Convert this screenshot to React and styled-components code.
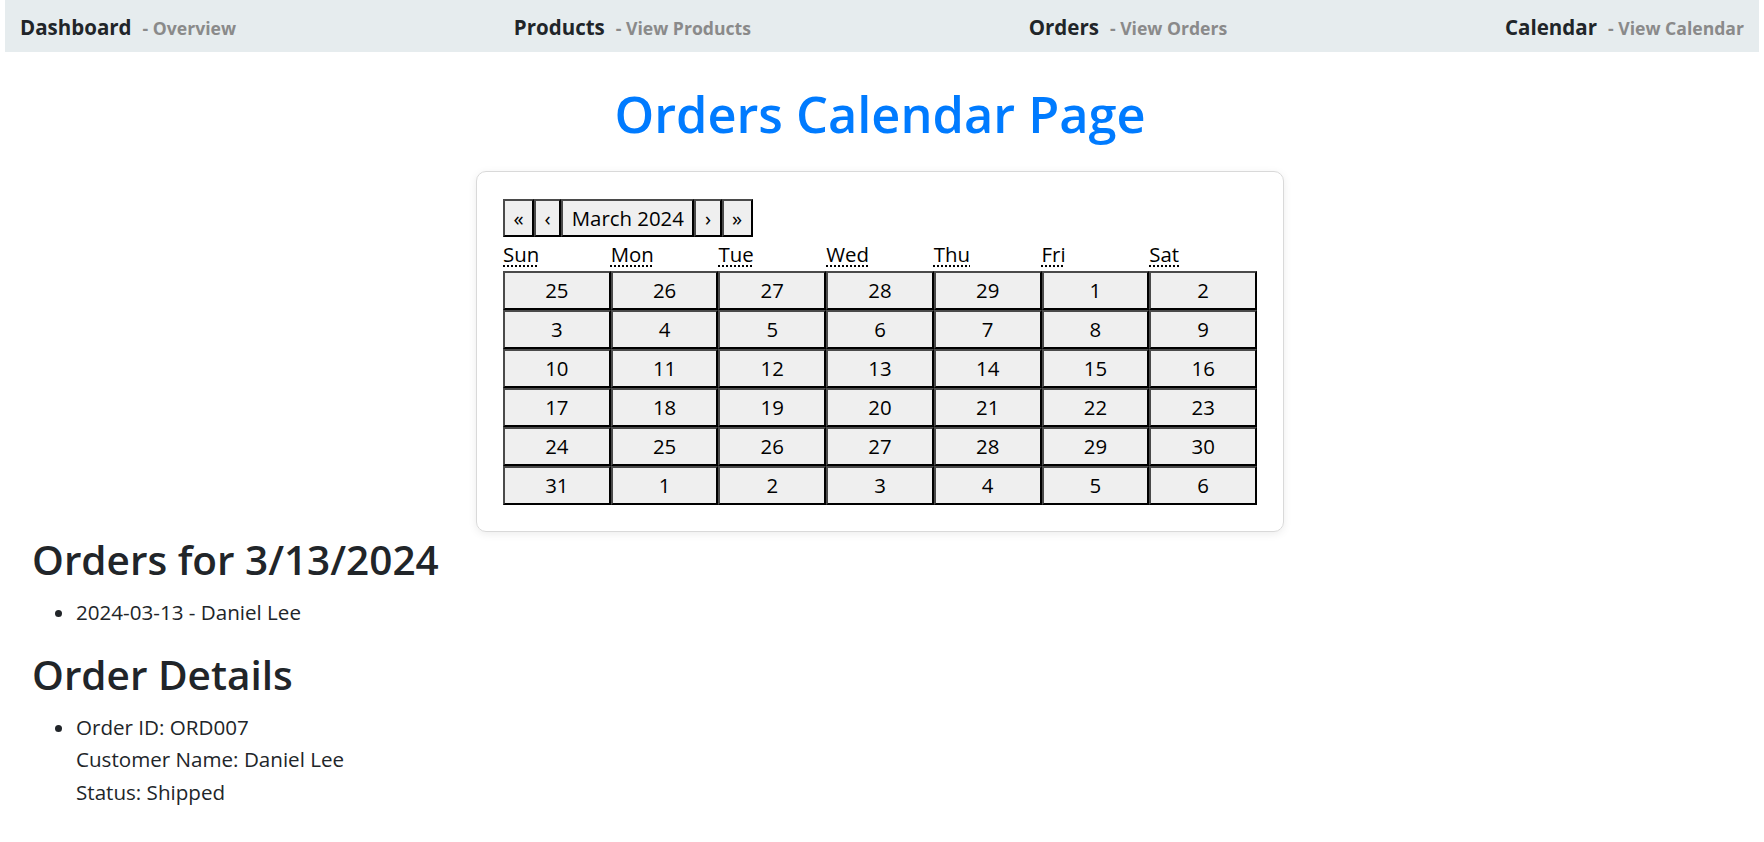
import React from "react";
import styled, { createGlobalStyle } from "styled-components";

const GlobalStyle = createGlobalStyle`
	body {
		margin: 0;
		font-family: "Open Sans", "Noto Sans", sans-serif;
		font-size: 21.6px;
		line-height: 32.4px;
		color: #212529;
		background: #fff;
	}
`;

const Page = styled.div`
	padding: 0 5px;
`;

const NavBar = styled.nav`
	display: flex;
	justify-content: space-between;
	align-items: center;
	height: 52px;
	padding: 4px 15px 0;
	box-sizing: border-box;
	background-color: #e6ecee;
`;

const NavItem = styled.div`
	font-size: 20.5px;
	font-weight: 700;
	color: #212529;
	white-space: nowrap;
`;

const NavSub = styled.span`
	font-size: 17.6px;
	color: #8a8a8a;
	margin-left: 11px;
`;

const Main = styled.main`
	padding: 29px 31px 0 27px;
`;

const Title = styled.h1`
	margin: 0 0 25px;
	text-align: center;
	font-size: 50.5px;
	line-height: 65px;
	font-weight: 600;
	color: #007bff;
`;

const Card = styled.div`
	width: 808px;
	box-sizing: border-box;
	margin: 0 auto;
	padding: 27px 26px 26px;
	border: 1px solid #d9d9d9;
	border-radius: 10px;
	box-shadow: 0 2px 8px rgba(0, 0, 0, 0.08);
`;

const CalNav = styled.div`
	display: flex;
`;

const CellButton = styled.button`
	font-family: inherit;
	font-size: 20.4px;
	line-height: 32px;
	color: #000;
	background-color: #efefef;
	border: 2px solid;
	border-color: #4a4a4a #000 #000 #4a4a4a;
	padding: 1px ${(p) => (p.$wide ? "8.5px" : "6px")};
	margin: 0;
	text-align: center;
`;

const Weekdays = styled.div`
	display: grid;
	grid-template-columns: repeat(7, 1fr);
	height: 33.5px;
	padding-top: 1px;
	box-sizing: border-box;
	font-size: 20.4px;
	color: #000;
`;

const Weekday = styled.abbr`
	text-decoration: underline dotted;
	text-underline-offset: 3px;
	justify-self: start;
`;

const Days = styled.div`
	display: grid;
	grid-template-columns: repeat(7, 1fr);
	grid-auto-rows: 39px;
`;

const Heading = styled.h2`
	margin: 2px 0 10px;
	font-size: 40.5px;
	line-height: 52px;
	font-weight: 600;
`;

const List = styled.ul`
	margin: 0 0 21px;
	padding-left: 44px;
	font-size: 20.6px;
`;

const weekdays = [
	["Sun", "Sunday"],
	["Mon", "Monday"],
	["Tue", "Tuesday"],
	["Wed", "Wednesday"],
	["Thu", "Thursday"],
	["Fri", "Friday"],
	["Sat", "Saturday"],
];

const days = [
	25, 26, 27, 28, 29, 1, 2,
	3, 4, 5, 6, 7, 8, 9,
	10, 11, 12, 13, 14, 15, 16,
	17, 18, 19, 20, 21, 22, 23,
	24, 25, 26, 27, 28, 29, 30,
	31, 1, 2, 3, 4, 5, 6,
];

const links = [
	["Dashboard", "Overview"],
	["Products", "View Products"],
	["Orders", "View Orders"],
	["Calendar", "View Calendar"],
];

export default function App() {
	return (
		<Page>
			<GlobalStyle />
			<NavBar>
				{links.map(([name, sub]) => (
					<NavItem key={name}>
						{name}
						<NavSub>- {sub}</NavSub>
					</NavItem>
				))}
			</NavBar>
			<Main>
				<Title>Orders Calendar Page</Title>
				<Card>
					<CalNav>
						<CellButton $wide>«</CellButton>
						<CellButton $wide>‹</CellButton>
						<CellButton $wide>March 2024</CellButton>
						<CellButton $wide>›</CellButton>
						<CellButton $wide>»</CellButton>
					</CalNav>
					<Weekdays>
						{weekdays.map(([short, long]) => (
							<div key={short}>
								<Weekday title={long}>{short}</Weekday>
							</div>
						))}
					</Weekdays>
					<Days>
						{days.map((d, i) => (
							<CellButton key={i}>{d}</CellButton>
						))}
					</Days>
				</Card>
				<Heading>Orders for 3/13/2024</Heading>
				<List>
					<li>2024-03-13 - Daniel Lee</li>
				</List>
				<Heading>Order Details</Heading>
				<List>
					<li>
						Order ID: ORD007
						<br />
						Customer Name: Daniel Lee
						<br />
						Status: Shipped
					</li>
				</List>
			</Main>
		</Page>
	);
}
